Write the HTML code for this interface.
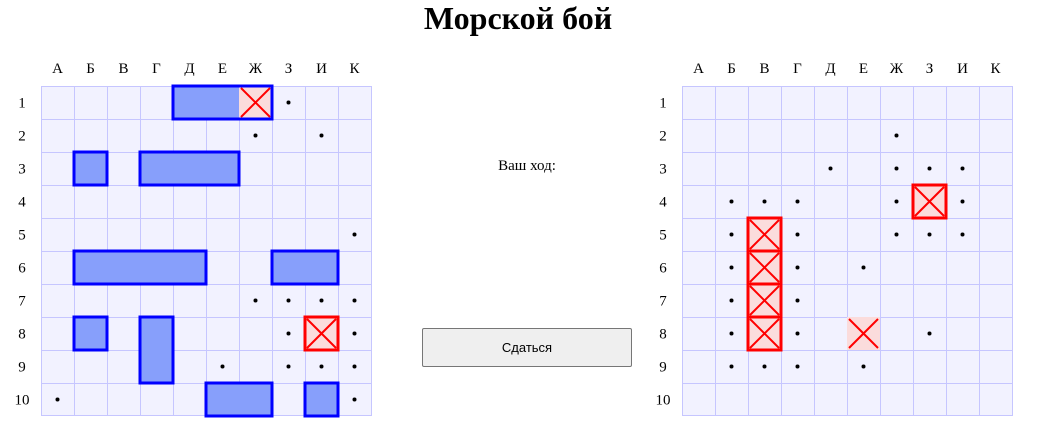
<!DOCTYPE html>
<html><head><meta charset="utf-8"><style>
html,body{margin:0;padding:0;background:#fff;width:1037px;height:446px;overflow:hidden}
svg{display:block}
.l{font-family:"Liberation Serif",serif;font-size:15px;fill:#000;text-anchor:middle}
.btn{position:absolute;left:422px;top:328px;width:210px;height:39px;box-sizing:border-box;background:#efefef;border:1px solid #767676;border-radius:2px;font-family:"Liberation Sans",sans-serif;font-size:13px;color:#000;text-align:center;line-height:37px}
</style></head><body>
<svg width="1037" height="446" xmlns="http://www.w3.org/2000/svg">
<defs>
<pattern id="g" x="41" y="86" width="33" height="33" patternUnits="userSpaceOnUse">
<rect width="33" height="33" fill="#f2f2ff"/>
<path d="M0.5 0V33M0 0.5H33" stroke="#c6c6ff" stroke-width="1"/>
</pattern>
<pattern id="g2" x="682" y="86" width="33" height="33" patternUnits="userSpaceOnUse">
<rect width="33" height="33" fill="#f2f2ff"/>
<path d="M0.5 0V33M0 0.5H33" stroke="#c6c6ff" stroke-width="1"/>
</pattern>
<symbol id="x" width="33" height="33" viewBox="0 0 33 33">
<rect width="33" height="33" fill="#fbdcdc"/>
<path d="M2 2L31 31M31 2L2 31" stroke="#ff0000" stroke-width="2"/>
</symbol>
</defs>
<text x="518" y="29" font-family="Liberation Serif,serif" font-weight="bold" font-size="32" text-anchor="middle">Морской бой</text>

<!-- left board -->
<g class="l">
<text x="57.5" y="73">А</text><text x="90.5" y="73">Б</text><text x="123.5" y="73">В</text><text x="156.5" y="73">Г</text><text x="189.5" y="73">Д</text><text x="222.5" y="73">Е</text><text x="255.5" y="73">Ж</text><text x="288.5" y="73">З</text><text x="321.5" y="73">И</text><text x="354.5" y="73">К</text>
<text x="22" y="107.5">1</text><text x="22" y="140.5">2</text><text x="22" y="173.5">3</text><text x="22" y="206.5">4</text><text x="22" y="239.5">5</text><text x="22" y="272.5">6</text><text x="22" y="305.5">7</text><text x="22" y="338.5">8</text><text x="22" y="371.5">9</text><text x="22" y="404.5">10</text>
</g>
<rect x="41" y="86" width="330" height="330" fill="url(#g)"/>
<path d="M371.5 86V416M41 415.5H371" stroke="#c6c6ff"/>
<g fill="#879ffb">
<rect x="173" y="86" width="99" height="33"/>
<rect x="74" y="152" width="33" height="33"/>
<rect x="140" y="152" width="99" height="33"/>
<rect x="74" y="251" width="132" height="33"/>
<rect x="272" y="251" width="66" height="33"/>
<rect x="74" y="317" width="33" height="33"/>
<rect x="140" y="317" width="33" height="66"/>
<rect x="206" y="383" width="66" height="33"/>
<rect x="305" y="383" width="33" height="33"/>
</g>
<use href="#x" x="239" y="86" width="33" height="33"/>
<use href="#x" x="305" y="317" width="33" height="33"/>
<g fill="none" stroke="#0000ff" stroke-width="3">
<rect x="173" y="86" width="99" height="33"/>
<rect x="74" y="152" width="33" height="33"/>
<rect x="140" y="152" width="99" height="33"/>
<rect x="74" y="251" width="132" height="33"/>
<rect x="272" y="251" width="66" height="33"/>
<rect x="74" y="317" width="33" height="33"/>
<rect x="140" y="317" width="33" height="66"/>
<rect x="206" y="383" width="66" height="33"/>
<rect x="305" y="383" width="33" height="33"/>
</g>
<rect x="305" y="317" width="33" height="33" fill="none" stroke="#ff0000" stroke-width="3"/>
<g fill="#000">
<circle cx="288.5" cy="102.5" r="2"/>
<circle cx="255.5" cy="135.5" r="2"/><circle cx="321.5" cy="135.5" r="2"/>
<circle cx="354.5" cy="234.5" r="2"/>
<circle cx="255.5" cy="300.5" r="2"/><circle cx="288.5" cy="300.5" r="2"/><circle cx="321.5" cy="300.5" r="2"/><circle cx="354.5" cy="300.5" r="2"/>
<circle cx="288.5" cy="333.5" r="2"/><circle cx="354.5" cy="333.5" r="2"/>
<circle cx="222.5" cy="366.5" r="2"/><circle cx="288.5" cy="366.5" r="2"/><circle cx="321.5" cy="366.5" r="2"/><circle cx="354.5" cy="366.5" r="2"/>
<circle cx="57.5" cy="399.5" r="2"/><circle cx="354.5" cy="399.5" r="2"/>
</g>

<text x="527" y="170" font-family="Liberation Serif,serif" font-size="15" text-anchor="middle">Ваш ход:</text>

<!-- right board -->
<g class="l">
<text x="698.5" y="73">А</text><text x="731.5" y="73">Б</text><text x="764.5" y="73">В</text><text x="797.5" y="73">Г</text><text x="830.5" y="73">Д</text><text x="863.5" y="73">Е</text><text x="896.5" y="73">Ж</text><text x="929.5" y="73">З</text><text x="962.5" y="73">И</text><text x="995.5" y="73">К</text>
<text x="663" y="107.5">1</text><text x="663" y="140.5">2</text><text x="663" y="173.5">3</text><text x="663" y="206.5">4</text><text x="663" y="239.5">5</text><text x="663" y="272.5">6</text><text x="663" y="305.5">7</text><text x="663" y="338.5">8</text><text x="663" y="371.5">9</text><text x="663" y="404.5">10</text>
</g>
<rect x="682" y="86" width="330" height="330" fill="url(#g2)"/>
<path d="M1012.5 86V416M682 415.5H1012" stroke="#c6c6ff"/>
<use href="#x" x="913" y="185" width="33" height="33"/>
<use href="#x" x="748" y="218" width="33" height="33"/>
<use href="#x" x="748" y="251" width="33" height="33"/>
<use href="#x" x="748" y="284" width="33" height="33"/>
<use href="#x" x="748" y="317" width="33" height="33"/>
<use href="#x" x="847" y="317" width="33" height="33"/>
<g fill="none" stroke="#ff0000" stroke-width="3">
<rect x="913" y="185" width="33" height="33"/>
<rect x="748" y="218" width="33" height="33"/>
<rect x="748" y="251" width="33" height="33"/>
<rect x="748" y="284" width="33" height="33"/>
<rect x="748" y="317" width="33" height="33"/>
</g>
<g fill="#000">
<circle cx="896.5" cy="135.5" r="2"/>
<circle cx="830.5" cy="168.5" r="2"/><circle cx="896.5" cy="168.5" r="2"/><circle cx="929.5" cy="168.5" r="2"/><circle cx="962.5" cy="168.5" r="2"/>
<circle cx="731.5" cy="201.5" r="2"/><circle cx="764.5" cy="201.5" r="2"/><circle cx="797.5" cy="201.5" r="2"/><circle cx="896.5" cy="201.5" r="2"/><circle cx="962.5" cy="201.5" r="2"/>
<circle cx="731.5" cy="234.5" r="2"/><circle cx="797.5" cy="234.5" r="2"/><circle cx="896.5" cy="234.5" r="2"/><circle cx="929.5" cy="234.5" r="2"/><circle cx="962.5" cy="234.5" r="2"/>
<circle cx="731.5" cy="267.5" r="2"/><circle cx="797.5" cy="267.5" r="2"/><circle cx="863.5" cy="267.5" r="2"/>
<circle cx="731.5" cy="300.5" r="2"/><circle cx="797.5" cy="300.5" r="2"/>
<circle cx="731.5" cy="333.5" r="2"/><circle cx="797.5" cy="333.5" r="2"/><circle cx="929.5" cy="333.5" r="2"/>
<circle cx="731.5" cy="366.5" r="2"/><circle cx="764.5" cy="366.5" r="2"/><circle cx="797.5" cy="366.5" r="2"/><circle cx="863.5" cy="366.5" r="2"/>
</g>
</svg>
<div class="btn">Сдаться</div>
</body></html>
